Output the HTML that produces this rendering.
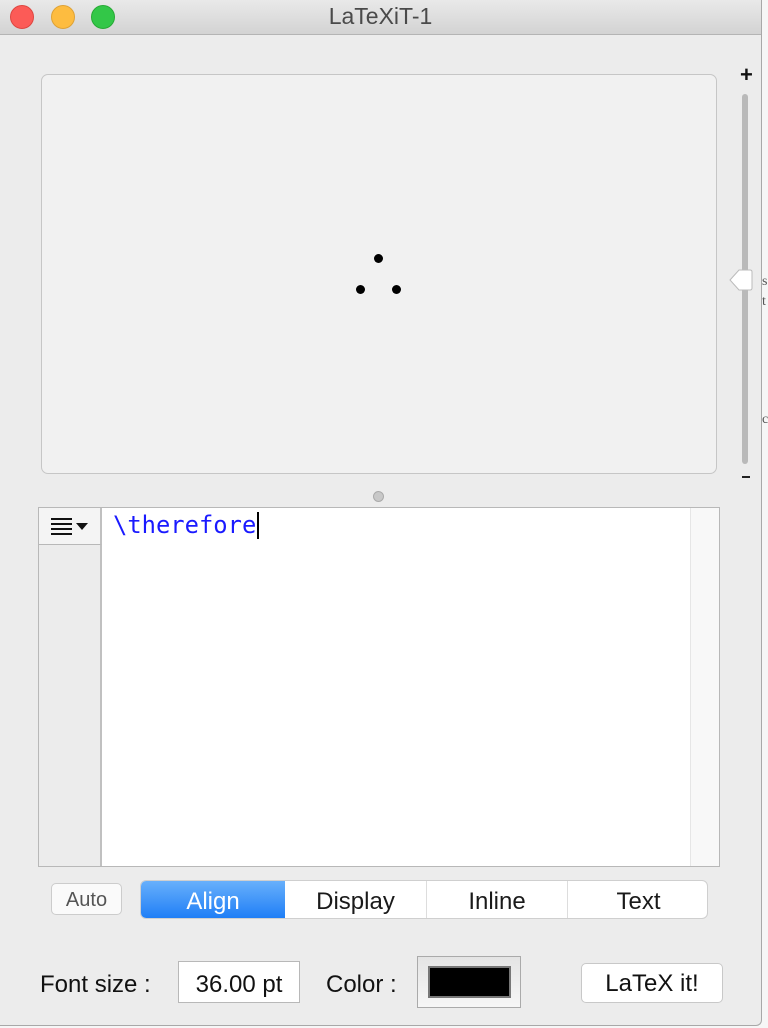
<!DOCTYPE html>
<html><head><meta charset="utf-8"><style>
*{margin:0;padding:0;box-sizing:border-box}
body{width:768px;height:1028px;background:#f6f6f6;position:relative;overflow:hidden;font-family:"Liberation Sans",sans-serif}
.win{position:absolute;left:0;top:0;width:762px;height:1026px;background:#ececec;border-right:1px solid #a8a8a8;border-bottom:1px solid #a8a8a8;border-radius:0 0 6px 0}
.tb{position:absolute;left:0;top:0;width:761px;height:35px;background:linear-gradient(#e9e9e9,#d3d3d3);border-bottom:1px solid #b4b4b4}
.tl{position:absolute;top:5px;width:24px;height:24px;border-radius:50%}
.title{position:absolute;left:0;width:761px;top:3px;text-align:center;font-size:23px;color:#4a4a4a}
.abs{position:absolute}
</style></head><body>
<div class="win">
<div class="tb">
<div class="tl" style="left:10px;background:#fc5b57;border:1px solid #de4640"></div>
<div class="tl" style="left:51px;background:#fdbc40;border:1px solid #dea236"></div>
<div class="tl" style="left:91px;background:#33c748;border:1px solid #27aa35"></div>
<div class="title">LaTeXiT-1</div>
</div>
<div class="abs" style="left:41px;top:74px;width:676px;height:400px;background:#f1f1f1;border:1px solid #c6c6c6;border-radius:7px"></div>
<div class="abs" style="left:374px;top:254px;width:9px;height:9px;border-radius:50%;background:#000"></div>
<div class="abs" style="left:356px;top:285px;width:9px;height:9px;border-radius:50%;background:#000"></div>
<div class="abs" style="left:392px;top:285px;width:9px;height:9px;border-radius:50%;background:#000"></div>
<div class="abs" style="left:740px;top:62px;font-size:22px;font-weight:bold;color:#111">+</div>
<div class="abs" style="left:742px;top:94px;width:6px;height:370px;background:#b9b9b9;border-radius:3px"></div>
<div class="abs" style="left:742px;top:476px;width:8px;height:2px;background:#222"></div>
<svg class="abs" style="left:729px;top:267px" width="24" height="26"><path d="M1 13 L10 3 L21 3 Q23 3 23 5 L23 21 Q23 23 21 23 L10 23 Z" fill="#fff" stroke="#bbb" stroke-width="1"/></svg>
<div class="abs" style="left:373px;top:491px;width:11px;height:11px;border-radius:50%;background:#c8c8c8;border:1px solid #aaa"></div>
<div class="abs" style="left:38px;top:507px;width:682px;height:360px;border:1px solid #b8b8b8;background:#fff"></div>
<div class="abs" style="left:39px;top:508px;width:63px;height:358px;background:#ececec;border-right:2px solid #c0c0c0"></div>
<div class="abs" style="left:39px;top:508px;width:63px;height:37px;background:#f4f4f4;border-bottom:1px solid #b8b8b8;border-right:2px solid #c0c0c0"></div>
<svg class="abs" style="left:48px;top:515px" width="46" height="24"><g stroke="#111" stroke-width="2"><line x1="3" y1="4" x2="24" y2="4"/><line x1="3" y1="9" x2="24" y2="9"/><line x1="3" y1="14" x2="24" y2="14"/><line x1="3" y1="19" x2="24" y2="19"/></g><path d="M28 8 L40 8 L34 15 Z" fill="#111"/></svg>
<div class="abs" style="left:690px;top:508px;width:29px;height:358px;background:#f8f8f8;border-left:1px solid #e6e6e6"></div>
<div class="abs" style="left:113px;top:509px;font-family:'DejaVu Sans Mono',monospace;font-size:23.8px;color:#1a1aff;line-height:32px">\therefore</div>
<div class="abs" style="left:257px;top:512px;width:2px;height:27px;background:#000"></div>
<div class="abs" style="left:51px;top:883px;width:71px;height:32px;background:#fafafa;border:1px solid #ccc;border-radius:5px;font-size:20px;color:#555;text-align:center;line-height:32px">Auto</div>
<div class="abs" style="left:140px;top:880px;width:568px;height:39px;background:#fff;border:1px solid #cfcfcf;border-radius:6px;overflow:hidden;font-size:24px;color:#1a1a1a">
<div class="abs" style="left:0;top:0;width:144px;height:39px;background:linear-gradient(#68b0fb,#1b7cf6);color:#fff;text-align:center;line-height:42px">Align</div>
<div class="abs" style="left:144px;top:0;width:142px;height:39px;border-right:1px solid #ddd;text-align:center;line-height:42px">Display</div>
<div class="abs" style="left:286px;top:0;width:141px;height:39px;border-right:1px solid #ddd;text-align:center;line-height:42px">Inline</div>
<div class="abs" style="left:427px;top:0;width:141px;height:39px;text-align:center;line-height:42px">Text</div>
</div>
<div class="abs" style="left:40px;top:971px;font-size:24px;color:#111">Font size :</div>
<div class="abs" style="left:178px;top:961px;width:122px;height:42px;background:#fff;border:1px solid #b8b8b8;font-size:24px;color:#111;text-align:center;line-height:46px">36.00 pt</div>
<div class="abs" style="left:326px;top:971px;font-size:24px;color:#111">Color :</div>
<div class="abs" style="left:417px;top:956px;width:104px;height:52px;background:linear-gradient(#e4e4e4,#f6f6f6);border:1px solid #aaa"></div>
<div class="abs" style="left:428px;top:966px;width:83px;height:32px;background:#000;border:2px solid #777"></div>
<div class="abs" style="left:581px;top:963px;width:142px;height:40px;background:#fff;border:1px solid #c8c8c8;border-radius:5px;font-size:24px;color:#111;text-align:center;line-height:40px">LaTeX it!</div>
</div>
<div class="abs" style="left:762px;top:272px;font-family:'Liberation Serif',serif;font-size:14px;color:#555;line-height:20px">s<br>t</div>
<div class="abs" style="left:762px;top:412px;font-family:'Liberation Serif',serif;font-size:14px;color:#555">c</div>
</body></html>
